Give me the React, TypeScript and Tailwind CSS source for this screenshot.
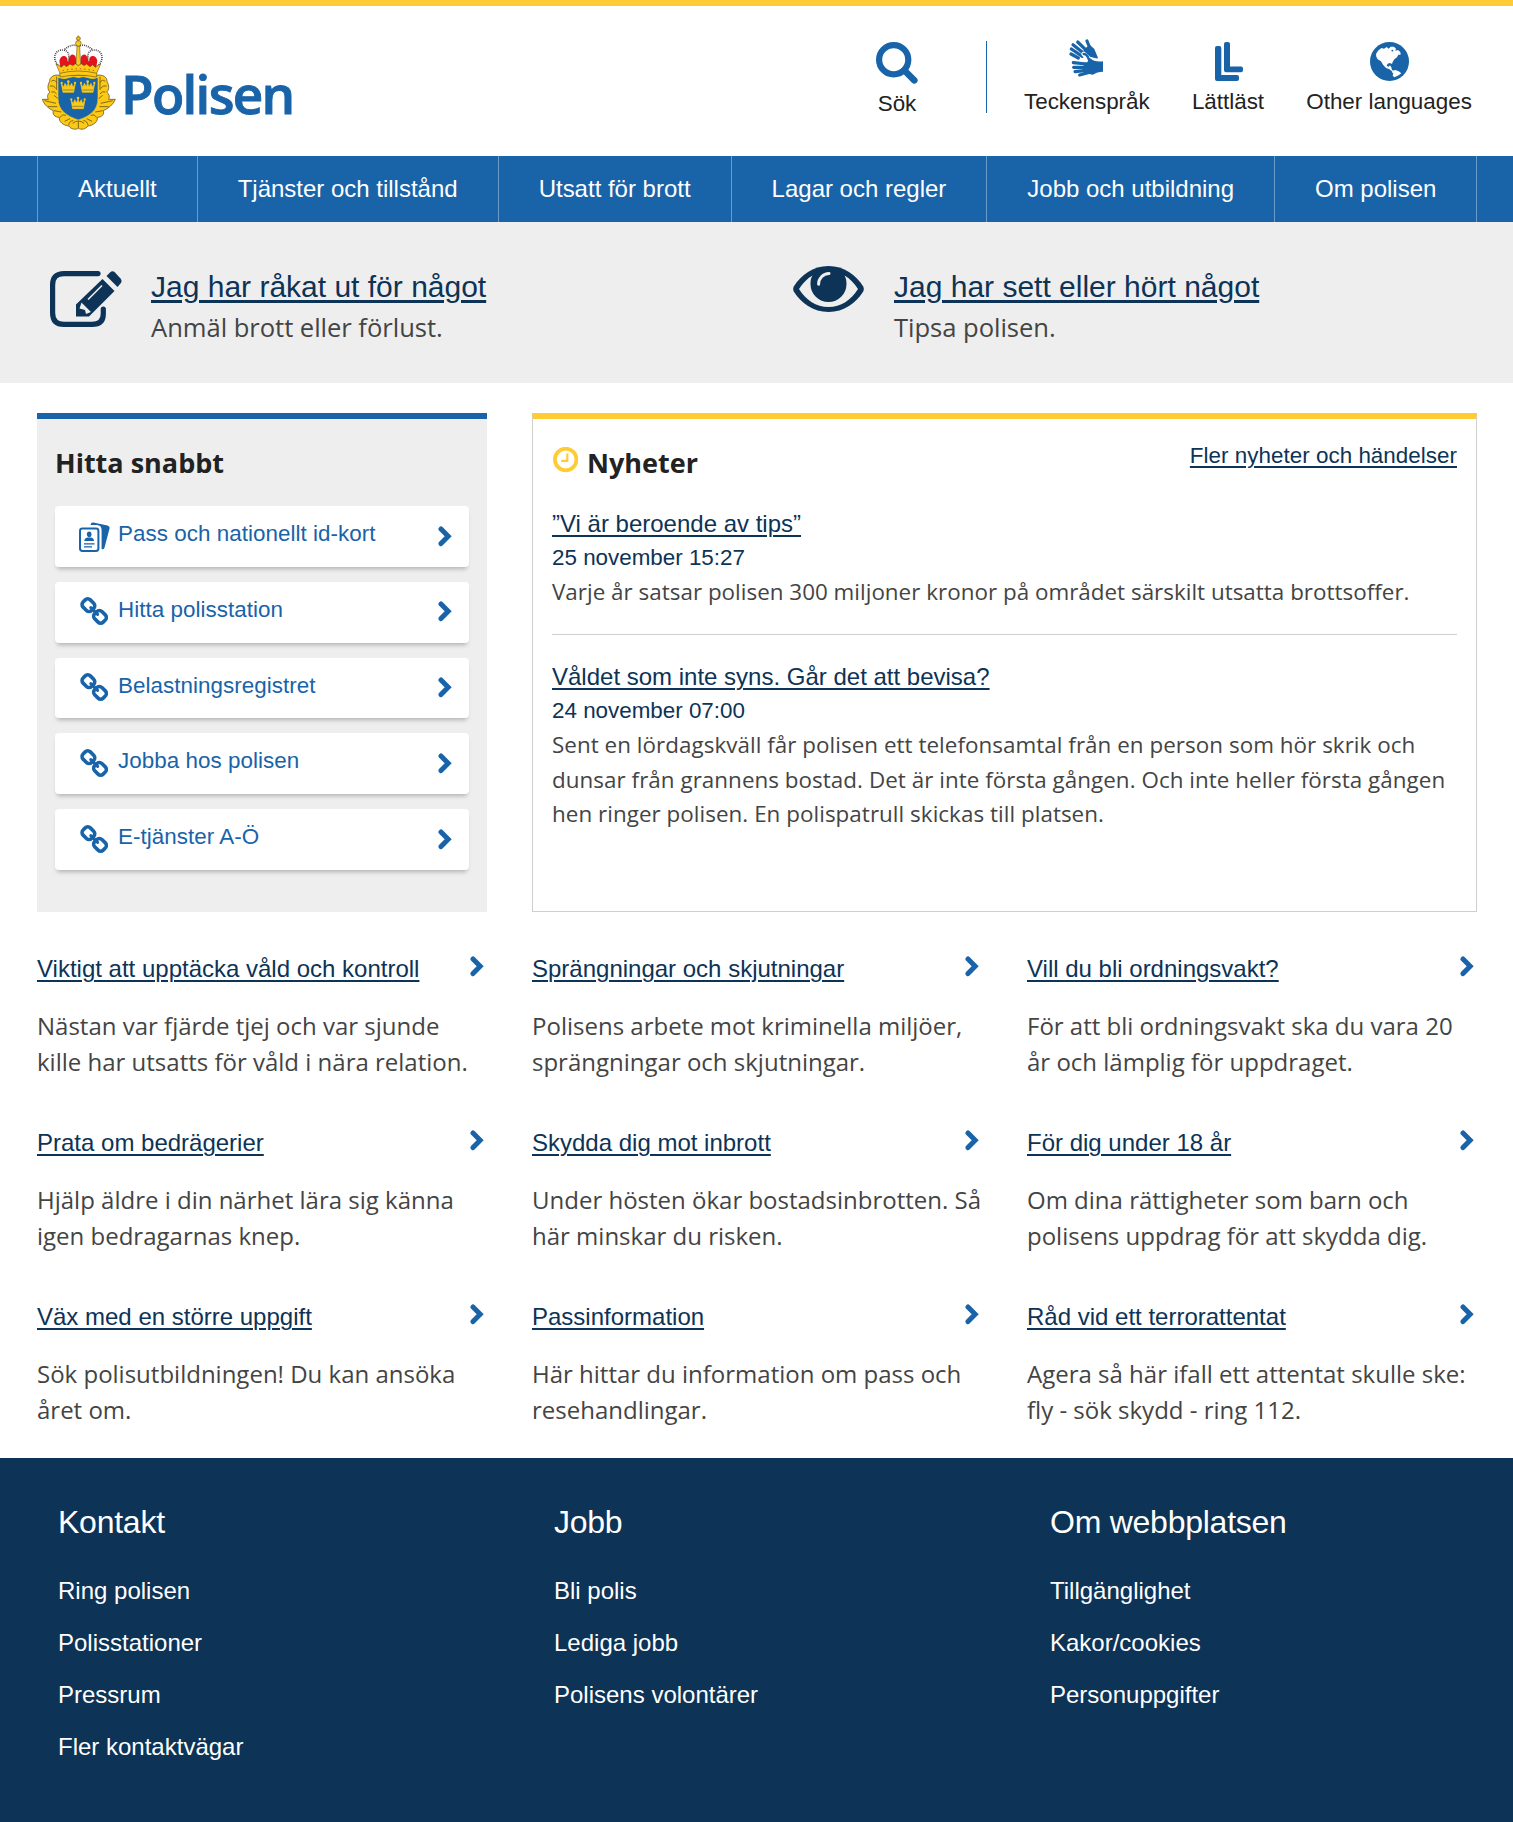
import React from "react";

const ARIAL = "font-['Liberation_Sans',Arial,sans-serif]";

function MiniCrown({ x, y }: { x: number; y: number }) {
  return (
    <g transform={`translate(${x} ${y})`}>
      <path d="M-21 -10 L-14 2 L-10 -10 L-4 0 L0 -12 L4 0 L10 -10 L14 2 L21 -10 L16 17 H-16 Z" fill="#fcc917" stroke="#fcc917" strokeWidth="2" strokeLinejoin="round" />
      <circle cx="-20" cy="-11" r="3.4" fill="#fcc917" />
      <circle cx="20" cy="-11" r="3.4" fill="#fcc917" />
      <circle cx="0" cy="-15" r="4" fill="#fcc917" />
      <path d="M-16 10 H16" stroke="#6b6a35" strokeWidth="2" />
    </g>
  );
}

function Crest() {
  return (
    <svg className="block" width="80" height="104" viewBox="0 0 240 312">
      <g fill="#fcc917" stroke="#4a3d10" strokeWidth="2" strokeLinejoin="round">
        <path d="M66 136 C48 132 34 142 35 154 C28 166 28 180 36 186 C28 192 27 200 31 208 L13 208 C18 224 32 236 46 242 C42 252 50 262 64 262 C62 276 76 286 92 288 C100 298 112 300 121 295 C130 300 142 298 150 288 C166 286 180 276 178 262 C192 262 200 252 196 242 C210 236 226 224 232 208 L212 208 C216 200 214 192 206 186 C214 180 214 166 207 154 C208 142 194 132 176 136 Z" />
      </g>
      <g fill="none" stroke="#6b5812" strokeWidth="2.5">
        <path d="M40 154 q10 -8 16 4 M36 168 q12 -4 18 8 M40 186 q10 -4 16 6 M20 212 l34 8 M30 230 l28 0 M48 242 l22 4 M66 262 q8 -12 18 -6 M92 286 q2 -14 14 -14 M56 140 v40 M48 196 l12 10 M80 274 l16 -8" />
        <path d="M202 154 q-10 -8 -16 4 M206 168 q-12 -4 -18 8 M202 186 q-10 -4 -16 6 M224 212 l-36 8 M212 230 l-28 0 M194 242 l-22 4 M176 262 q-8 -12 -18 -6 M150 286 q-2 -14 -14 -14 M186 140 v40 M194 196 l-12 10 M162 274 l-16 -8" />
        <path d="M121 272 v22 M104 280 q17 -14 34 0" />
      </g>
      <path d="M60 142 Q76 150 92 143 Q107 137 121 143 Q135 137 150 143 Q166 150 180 142 V204 C180 242 156 258 121 270 C86 258 60 242 60 204 Z" fill="#1963a9" stroke="#fcc917" strokeWidth="2" />
      <MiniCrown x={91} y={170} />
      <MiniCrown x={149} y={170} />
      <MiniCrown x={120} y={219} />
      <path d="M68 118 C44 92 50 68 74 60 C92 46 108 42 121 46 C134 42 150 46 168 60 C192 68 198 92 174 118 Z" fill="#fff" />
      <g fill="#e4141b">
        <path d="M64 92 q4 -16 16 -14 q10 4 8 14 l8 4 l-6 16 l-22 6 z" />
        <path d="M92 88 q4 -16 14 -14 q8 2 8 14 v18 l-22 3 z" />
        <path d="M150 88 q-4 -16 -14 -14 q-8 2 -8 14 v18 l22 3 z" />
        <path d="M178 92 q-4 -16 -16 -14 q-10 4 -8 14 l-8 4 l6 16 l22 6 z" />
      </g>
      <g fill="none" stroke="#4b4b4b" strokeWidth="5" strokeDasharray="3 3">
        <path d="M64 110 C38 84 52 58 76 60 C92 62 94 74 92 92" />
        <path d="M178 110 C204 84 190 58 166 60 C150 62 148 74 150 92" />
        <path d="M80 58 Q102 40 118 48" />
        <path d="M162 58 Q140 40 124 48" />
      </g>
      <g fill="#fcc917" stroke="#4a3d10" strokeWidth="1.5">
        <path d="M117 48 h8 l3 58 h-14 z" />
        <circle cx="121" cy="40" r="8.5" />
        <path d="M119 32 v-4 h-4 v-5 h4 v-5 h4 v5 h4 v5 h-4 v4 z" />
        <path d="M54 102 l8 4 l8 6 l8 -8 l8 6 l10 -8 l8 5 l8 -6 l9 6 l9 -6 l8 6 l8 -5 l10 8 l8 -6 l8 8 l8 -6 l8 -4 l-13 30 Q121 120 67 132 z" />
        <path d="M65 130 Q121 116 177 130 L175 141 Q121 130 67 141 z" />
      </g>
      <path d="M74 122 Q121 111 168 122" fill="none" stroke="#c23a1d" strokeWidth="3" strokeDasharray="4 9" />
    </svg>
  );
}

function SearchIcon() {
  return (
    <svg className="block" width="42" height="42" viewBox="0 0 42 42" fill="none" stroke="#1963a9">
      <circle cx="17.7" cy="17.7" r="14.6" strokeWidth="6.2" />
      <path d="M29 29 L38.3 38.3" strokeWidth="6.6" strokeLinecap="round" />
    </svg>
  );
}

function HandsIcon() {
  return (
    <svg className="-mt-[3px] -ml-px block" width="34" height="38" viewBox="0 0 102 114" fill="none" strokeLinecap="round" strokeLinejoin="round">
      <g stroke="#1963a9" strokeWidth="9.5">
        <path d="M54 6 L66 36" />
        <path d="M26 9 L56 38" />
        <path d="M12 17 L48 46" />
        <path d="M7 30 L40 52" />
        <path d="M6 45 L28 57" />
        <path d="M62 22 L73 32 L83 56 L60 50 L40 44 L52 30 Z" fill="#1963a9" strokeWidth="7" />
      </g>
      <path d="M44 45 L60 60 L84 66 L100 72" stroke="#fff" strokeWidth="14" />
      <path d="M12 71 L42 74" stroke="#fff" strokeWidth="13" />
      <g stroke="#1963a9" strokeWidth="9.5">
        <path d="M44 45 Q54 44 60 62" strokeWidth="7.5" />
        <path d="M13 71 L52 75" />
        <path d="M14 85 L52 85" />
        <path d="M18 98 L52 94" />
        <path d="M32 108 L62 100" />
      </g>
      <path d="M44 70 Q58 74 58 60 L64 58 Q76 70 102 67 V98 Q84 98 72 107 L44 102 Z" fill="#1963a9" />
    </svg>
  );
}

function EasyReadIcon() {
  return (
    <svg className="ml-[2px] block" width="28" height="39" viewBox="0 0 28 39" fill="#1963a9">
      <path d="M0 6 a2 2 0 0 1 2 -2 h2.3 a2 2 0 0 1 2 2 V33 H22 a2 2 0 0 1 2 2 v2 a2 2 0 0 1 -2 2 H2 a2 2 0 0 1 -2 -2z" />
      <path d="M9 2 a2 2 0 0 1 2 -2 h2 a2 2 0 0 1 2 2 V24.4 H26 a2 2 0 0 1 2 2 v1.8 a2 2 0 0 1 -2 2 H11 a2 2 0 0 1 -2 -2z" />
    </svg>
  );
}

function GlobeIcon() {
  return (
    <svg className="block" width="39" height="39" viewBox="0 0 117 117">
      <circle cx="58.5" cy="58.5" r="58.5" fill="#1963a9" />
      <path
        d="M18 36 L24 26 L34 18 L42 20 L50 15 L56 20 L62 14 L72 14 L78 20 L76 26 L84 24 L91 30 L92 38 L85 38 L81 46 L73 52 L68 60 L66 66 L60 63 L53 65 L50 72 L56 74 L60 70 L64 76 L66 84 L72 87 L66 88 L58 82 L48 78 L39 68 L33 58 L23 52 L19 44 Z"
        fill="#fff"
      />
      <path d="M68 86 L76 84 L86 88 L94 94 L88 98 L82 102 L72 106 L68 100 L70 94 L65 90 Z" fill="#fff" />
      <path d="M64 24 l5 -1 l1 4 l-4 2 z" fill="#1963a9" />
    </svg>
  );
}

function EditIcon() {
  return (
    <svg className="block" width="72" height="56" viewBox="0 0 72 56">
      <path
        d="M48 2.6 H14 Q2.6 2.6 2.6 14 V42 Q2.6 53.4 14 53.4 H42 Q53.3 53.4 53.3 43 V38"
        fill="none"
        stroke="#0d3356"
        strokeWidth="5.2"
        strokeLinecap="round"
      />
      <path d="M52.5 8 L64.5 20 L39 45.5 H26 V33.5 Z" fill="#0d3356" />
      <path d="M56.5 5 L60 1.5 Q62.5 -0.8 65 1.5 L70.5 7.5 Q72.6 10 70.5 12.5 L67.5 16 Z" fill="#0d3356" />
      <path d="M31.5 31.5 L41 41 L36 43 L35 39 L29.5 37.5 Z" fill="#eee" />
      <path d="M38 28.5 L52 14.5" stroke="#eee" strokeWidth="1.6" />
    </svg>
  );
}

function EyeIcon() {
  return (
    <svg className="block" width="71" height="46" viewBox="0 0 71 46">
      <path d="M.8 20.5 C8 9 20 0 35.5 0 S63 9 70.2 20.5 Q71.4 23 70.2 25.5 C63 37 51 46 35.5 46 S8 37 .8 25.5 Q-.4 23 .8 20.5Z" fill="#0d3356" />
      <path
        d="M6 23 C10 17 14 12.5 19.5 9.5 C17.8 12 17.5 15 17.5 18 A18 18 0 0 0 53.5 18 C53.5 15 53 12 51.5 9.5 C57 12.5 61 17 65 23 C58 34 48 41 35.5 41 S13 34 6 23Z"
        fill="#eee"
      />
      <path d="M25.6 18.3 A10.5 10.5 0 0 1 36 7.6" fill="none" stroke="#eee" strokeWidth="3" strokeLinecap="round" />
    </svg>
  );
}

function ClockIcon() {
  return (
    <svg className="block" width="26" height="26" viewBox="0 0 26 26" fill="none" stroke="#ffcc33">
      <circle cx="13.7" cy="12.5" r="10.8" strokeWidth="3.8" />
      <path d="M15.3 6.5 V13.8 H9.2" strokeWidth="2.2" />
    </svg>
  );
}

function PassIcon() {
  return (
    <svg className="-ml-px block" width="31" height="30" viewBox="0 0 31 30">
      <path d="M11.5 3 Q12 .3 14.2 .6 L28.5 3.4 Q31.3 4.3 30.4 7 L25.4 26 Q24.4 28 22.6 27 V8 Q22.5 3.2 18 3Z" fill="#1963a9" />
      <rect x="1" y="6.6" width="18.4" height="22.4" rx="2.4" fill="#fff" stroke="#1963a9" strokeWidth="2" />
      <ellipse cx="10.2" cy="12.2" rx="2.3" ry="2.8" fill="#1963a9" />
      <path d="M5.3 19 Q5.3 16.3 8.5 15.6 H12 Q15 16.3 15 19Z" fill="#1963a9" />
      <path d="M5 21.8 H15.6 M5 24.8 H13" stroke="#1963a9" strokeWidth="1.2" />
    </svg>
  );
}

function LinkIcon() {
  return (
    <svg className="block" width="28" height="28" viewBox="0 0 28 28" fill="none" stroke="#1963a9" strokeWidth="3.6">
      <rect x="2.4" y="3.1" width="12" height="10.2" rx="3.6" transform="rotate(45 8.4 8.2)" />
      <rect x="14" y="14.7" width="12" height="10.2" rx="3.6" transform="rotate(45 20 19.8)" />
      <path d="M10.8 10.6 L17.6 17.4" strokeLinecap="round" strokeWidth="3" />
    </svg>
  );
}

function Chevron() {
  return (
    <svg className="block shrink-0" width="14" height="21" viewBox="0 0 14 21" fill="none" stroke="#1963a9">
      <path d="M3 3 L10.2 10.3 L3 17.6" strokeWidth="5" strokeLinecap="round" />
    </svg>
  );
}

const nav = ["Aktuellt", "Tjänster och tillstånd", "Utsatt för brott", "Lagar och regler", "Jobb och utbildning", "Om polisen"];

const quick = ["Pass och nationellt id-kort", "Hitta polisstation", "Belastningsregistret", "Jobba hos polisen", "E-tjänster A-Ö"];

const puffs = [
  ["Viktigt att upptäcka våld och kontroll", "Nästan var fjärde tjej och var sjunde", "kille har utsatts för våld i nära relation."],
  ["Sprängningar och skjutningar", "Polisens arbete mot kriminella miljöer,", "sprängningar och skjutningar."],
  ["Vill du bli ordningsvakt?", "För att bli ordningsvakt ska du vara 20", "år och lämplig för uppdraget."],
  ["Prata om bedrägerier", "Hjälp äldre i din närhet lära sig känna", "igen bedragarnas knep."],
  ["Skydda dig mot inbrott", "Under hösten ökar bostadsinbrotten. Så", "här minskar du risken."],
  ["För dig under 18 år", "Om dina rättigheter som barn och", "polisens uppdrag för att skydda dig."],
  ["Väx med en större uppgift", "Sök polisutbildningen! Du kan ansöka", "året om."],
  ["Passinformation", "Här hittar du information om pass och", "resehandlingar."],
  ["Råd vid ett terrorattentat", "Agera så här ifall ett attentat skulle ske:", "fly - sök skydd - ring 112."],
];

const footer = [
  { title: "Kontakt", links: ["Ring polisen", "Polisstationer", "Pressrum", "Fler kontaktvägar"] },
  { title: "Jobb", links: ["Bli polis", "Lediga jobb", "Polisens volontärer"] },
  { title: "Om webbplatsen", links: ["Tillgänglighet", "Kakor/cookies", "Personuppgifter"] },
];

function Tool({ icon, label }: { icon: React.ReactNode; label: string }) {
  return (
    <a className="flex flex-col items-center">
      <span className="flex h-[44px] items-start">{icon}</span>
      <span className="mt-[2px] text-[22.4px] leading-[28px] whitespace-nowrap text-[#222]">{label}</span>
    </a>
  );
}

export default function App() {
  return (
    <div className={`h-[1822px] w-[1513px] overflow-hidden bg-white ${ARIAL}`}>
      <header className="flex h-[156px] items-start border-t-[6px] border-[#ffcc33] pl-[38px]">
        <div className="flex w-[830px] pt-[24px]">
          <Crest />
          <span className="ml-[3px] pt-[34px] font-['Open_Sans',sans-serif] text-[53px] leading-[60px] font-semibold tracking-[-1.7px] text-[#1963a9] [-webkit-text-stroke:0.9px_#1963a9]">
            Polisen
          </span>
        </div>
        <div className="flex pt-[36px]">
          <a className="ml-[8px] flex flex-col items-center">
            <SearchIcon />
            <span className="mt-[6px] text-[22.4px] leading-[28px] text-[#222]">Sök</span>
          </a>
          <div className="-mt-[1px] ml-[68px] h-[72px] w-px bg-[#1963a9]" />
          <div className="ml-[37px] flex gap-[42.2px]">
            <Tool label="Teckenspråk" icon={<HandsIcon />} />
            <Tool label="Lättläst" icon={<EasyReadIcon />} />
            <Tool label="Other languages" icon={<GlobeIcon />} />
          </div>
        </div>
      </header>

      <nav className="flex h-[66px] bg-[#1963a9] pl-[37px]">
        <div className="flex border-l border-[#6b9cc9]">
          {nav.map((n) => (
            <a
              key={n}
              className="border-r border-[#6b9cc9] px-[40px] text-[24px] leading-[66px] tracking-[-0.006px] whitespace-nowrap text-white"
            >
              {n}
            </a>
          ))}
        </div>
      </nav>

      <section className="flex h-[161px] bg-[#eeeeee] pl-[50px]">
        <div className="flex w-[743px] gap-[29px]">
          <div className="pt-[49px]">
            <EditIcon />
          </div>
          <div className="pt-[46px]">
            <div className="text-[30px] leading-[38px] text-[#0d3356] underline decoration-[3px] underline-offset-[3px]">Jag har råkat ut för något</div>
            <div className="mt-[2px] font-['Open_Sans',sans-serif] text-[25.6px] leading-[40px] tracking-[-0.04px] text-[#444]">Anmäl brott eller förlust.</div>
          </div>
        </div>
        <div className="flex gap-[30px]">
          <div className="pt-[44px]">
            <EyeIcon />
          </div>
          <div className="pt-[46px]">
            <div className="text-[30px] leading-[38px] text-[#0d3356] underline decoration-[3px] underline-offset-[3px]">Jag har sett eller hört något</div>
            <div className="mt-[2px] font-['Open_Sans',sans-serif] text-[25.6px] leading-[40px] tracking-[-0.04px] text-[#444]">Tipsa polisen.</div>
          </div>
        </div>
      </section>

      <main className="mt-[30px] ml-[37px] w-[1440px]">
        <div className="flex h-[499px] gap-[45px]">
          <section className="w-[450px] border-t-[6px] border-[#1963a9] bg-[#eeeeee] px-[18px]">
            <h2 className="mt-[24px] font-['Open_Sans',sans-serif] text-[27px] leading-[40px] font-bold text-[#222]">Hitta snabbt</h2>
            <div className="mt-[23px] flex flex-col gap-[15px]">
              {quick.map((q, i) => (
                <a
                  key={q}
                  className="flex h-[60.8px] items-start rounded-[4px] bg-white pr-[17px] pl-[24px] shadow-[0_4px_4px_-2px_rgba(0,0,0,0.25)]"
                >
                  <span className="mt-[15.5px] flex w-[39px] justify-start pl-px">{i === 0 ? <PassIcon /> : <LinkIcon />}</span>
                  <span className="mt-[12px] flex-1 text-[22.4px] leading-[32px] tracking-[0.04px] text-[#1963a9]">{q}</span>
                  <span className="mt-[19.6px]">
                    <Chevron />
                  </span>
                </a>
              ))}
            </div>
          </section>

          <section className="w-[945px] border border-t-[6px] border-[#cfcfcf] border-t-[#ffcc33] px-[19px]">
            <div className="flex items-start">
              <span className="mt-[28px]">
                <ClockIcon />
              </span>
              <h2 className="mt-[24px] ml-[9px] font-['Open_Sans',sans-serif] text-[27px] leading-[40px] font-bold text-[#222]">Nyheter</h2>
              <a className="mt-[20px] ml-auto text-[22.4px] leading-[34px] tracking-[0.03px] text-[#0d3356] underline decoration-[2px] underline-offset-[3px]">
                Fler nyheter och händelser
              </a>
            </div>
            <article className="mt-[24px] h-[128px] border-b border-[#cfcfcf] leading-[34.2px]">
              <a className="block text-[24px] text-[#0d3356] underline decoration-[2px] underline-offset-[3px]">”Vi är beroende av tips”</a>
              <div className="text-[22.4px] text-[#0d3356]">25 november 15:27</div>
              <p className="font-['Open_Sans',sans-serif] text-[22.4px] tracking-[0.02px] whitespace-nowrap text-[#444]">
                Varje år satsar polisen 300 miljoner kronor på området särskilt utsatta brottsoffer.
              </p>
            </article>
            <article className="mt-[25px] leading-[34.2px]">
              <a className="block text-[24px] text-[#0d3356] underline decoration-[2px] underline-offset-[3px]">Våldet som inte syns. Går det att bevisa?</a>
              <div className="text-[22.4px] text-[#0d3356]">24 november 07:00</div>
              <p className="font-['Open_Sans',sans-serif] text-[22.4px] tracking-[0.045px] whitespace-nowrap text-[#444]">
                Sent en lördagskväll får polisen ett telefonsamtal från en person som hör skrik och
                <br />
                dunsar från grannens bostad. Det är inte första gången. Och inte heller första gången
                <br />
                hen ringer polisen. En polispatrull skickas till platsen.
              </p>
            </article>
          </section>
        </div>

        <div className="mt-[39px] grid h-[507px] grid-cols-3 gap-x-[45px]">
          {puffs.map(([t, a, b]) => (
            <article key={t} className="h-[174px]">
              <div className="flex items-start justify-between pr-[3px]">
                <a className="text-[24px] leading-[36px] whitespace-nowrap text-[#0d3356] underline decoration-[2px] underline-offset-[3px]">{t}</a>
                <span className="mt-[5px]">
                  <Chevron />
                </span>
              </div>
              <p className="mt-[21px] font-['Open_Sans',sans-serif] text-[24px] leading-[36px] whitespace-nowrap text-[#444]">
                {a}
                <br />
                {b}
              </p>
            </article>
          ))}
        </div>
      </main>

      <footer className="flex h-[364px] bg-[#0d3356] pl-[58px] text-white">
        {footer.map((f) => (
          <div key={f.title} className="w-[496px] shrink-0 pt-[44px]">
            <h3 className="text-[32px] leading-[40px] tracking-[-0.25px]">{f.title}</h3>
            <ul className="mt-[23px]">
              {f.links.map((l) => (
                <li key={l} className="text-[24px] leading-[52px]">
                  {l}
                </li>
              ))}
            </ul>
          </div>
        ))}
      </footer>
    </div>
  );
}
